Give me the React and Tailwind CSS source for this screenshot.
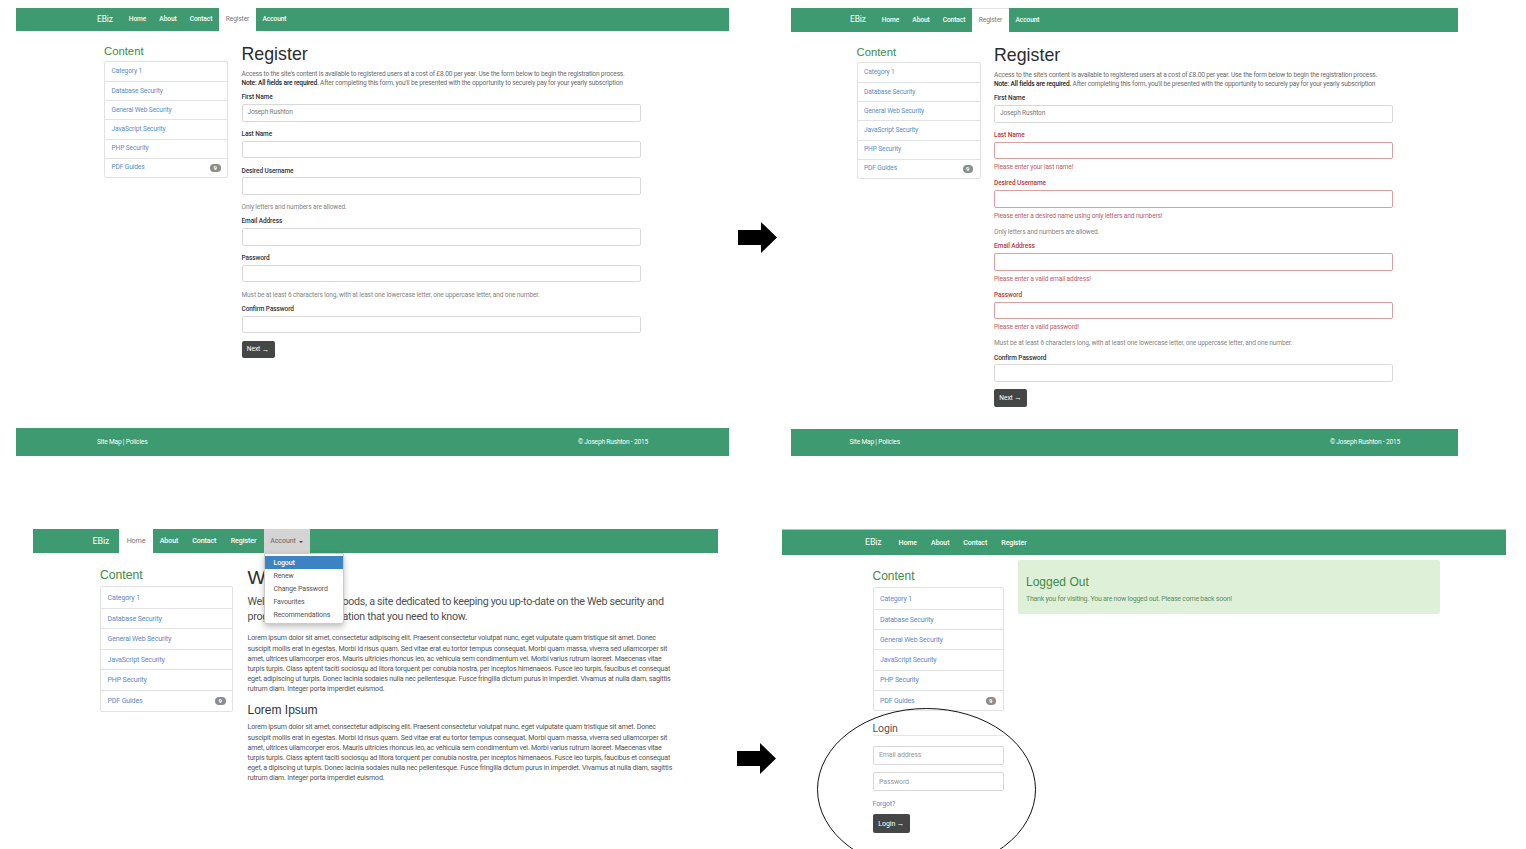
import React from "react";

const SANS = "font-['Roboto','Noto_Sans',sans-serif]";
const HEAD = "font-['Liberation_Sans',Arial,sans-serif]";

const LOREM = [
  "Lorem ipsum dolor sit amet, consectetur adipiscing elit. Praesent consectetur volutpat nunc, eget vulputate quam tristique sit amet. Donec",
  "suscipit mollis erat in egestas. Morbi id risus quam. Sed vitae erat eu tortor tempus consequat. Morbi quam massa, viverra sed ullamcorper sit",
  "amet, ultrices ullamcorper eros. Mauris ultricies rhoncus leo, ac vehicula sem condimentum vel. Morbi varius rutrum laoreet. Maecenas vitae",
  "turpis turpis. Class aptent taciti sociosqu ad litora torquent per conubia nostra, per inceptos himenaeos. Fusce leo turpis, faucibus et consequat",
  "eget, adipiscing ut turpis. Donec lacinia sodales nulla nec pellentesque. Fusce fringilla dictum purus in imperdiet. Vivamus at nulla diam, sagittis",
  "rutrum diam. Integer porta imperdiet euismod.",
];

const LOREM_SECOND = LOREM.map((line, i) =>
  i === 4 ? line.replace("eget, adipiscing", "eget, a dipiscing") : line
);

const CATEGORIES = [
  "Category 1",
  "Database Security",
  "General Web Security",
  "JavaScript Security",
  "PHP Security",
  "PDF Guides",
];

function Arrow({ className }) {
  return (
    <svg className={className} width="39" height="31" viewBox="0 0 39 31">
      <path d="M0 8h23V0l16 15.5L23 31v-8H0z" fill="#000" />
    </svg>
  );
}

function NavLink({ children, className = "" }) {
  return (
    <a className={`flex h-full items-center justify-center pt-[1.5px] whitespace-nowrap ${className}`}>
      {children}
    </a>
  );
}

function ArrowButton({ children, className }) {
  return (
    <button
      className={`flex items-center justify-center gap-[1.5px] rounded-[2px] bg-[#444746] tracking-[-0.05px] text-white ${className}`}
    >
      <span className="pt-[1px]">{children}</span>
      <span className={`${HEAD} text-[7.5px] leading-none`}>→</span>
    </button>
  );
}

function Sidebar({ headingClass, listClass, rowClass }) {
  return (
    <>
      <h3 className={`${HEAD} text-[#3f8a44] ${headingClass}`}>Content</h3>
      <ul className={`rounded-[2px] border border-[#e2e2e2] ${listClass}`}>
        {CATEGORIES.map((name, i) => (
          <li
            key={name}
            className={`flex items-center justify-between px-[6.5px] text-[#5a8cc6] ${rowClass} ${
              i > 0 ? "border-t border-[#e2e2e2]" : ""
            }`}
          >
            <span className="pt-[1px]">{name}</span>
            {name === "PDF Guides" && (
              <span className="flex h-[8px] w-[10.5px] items-center justify-center rounded-full bg-[#8c8c8c] text-[6px] leading-none font-bold text-white">
                9
              </span>
            )}
          </li>
        ))}
      </ul>
    </>
  );
}

function Field({ label, value, error, hint }) {
  return (
    <div>
      <div
        className={`h-[10px] text-[6.5px] leading-[10px] font-medium tracking-[-0.09px] ${
          error ? "text-[#b3383c]" : "text-[#333]"
        }`}
      >
        {label}
      </div>
      <div
        className={`mt-[1.8px] flex h-[17.5px] items-center rounded-[2px] border px-[5px] pt-[1px] text-[6.5px] tracking-[-0.12px] text-[#777] ${
          error ? "border-[#d9a09f]" : "border-[#d9d9d9]"
        }`}
      >
        {value}
      </div>
      {error && <div className="mt-[3px] h-[10px] leading-[10px] text-[#b9605f]">{error}</div>}
      <div className={error ? "h-[6.3px]" : "h-[7.4px]"} />
      {hint && <div className="mb-[4.2px] h-[10px] leading-[10px] text-[#858585]">{hint}</div>}
    </div>
  );
}

function RegisterForm({ errors = {} }) {
  return (
    <div className="w-[399px]">
      <h1 className={`${HEAD} h-[20px] text-[17.8px] leading-[20px] text-[#2c2c2c]`}>Register</h1>
      <p className="mt-[5.5px] text-[6.6px] leading-[9.9px] tracking-[-0.165px] whitespace-nowrap text-[#6a6a6a]">
        Access to the site's content is available to registered users at a cost of £8.00 per year. Use the form
        below to begin the registration process.
        <br />
        <b className="font-medium text-[#222]">Note: All fields are required.</b> After completing this form,
        you'll be presented with the opportunity to securely pay for your yearly subscription
      </p>
      <div className="mt-[2.9px] text-[6.6px] tracking-[-0.135px]">
        <Field label="First Name" value="Joseph Rushton" />
        <Field label="Last Name" error={errors.last} />
        <Field label="Desired Username" error={errors.username} hint="Only letters and numbers are allowed." />
        <Field label="Email Address" error={errors.email} />
        <Field
          label="Password"
          error={errors.password}
          hint="Must be at least 6 characters long, with at least one lowercase letter, one uppercase letter, and one number."
        />
        <Field label="Confirm Password" />
      </div>
      <ArrowButton className="h-[17.5px] w-[33px] text-[6.6px]">Next</ArrowButton>
    </div>
  );
}

function RegisterPage({ className, navClass, tabClass = "", footerClass, gutterClass, errors }) {
  return (
    <section className={`flex flex-col ${className}`}>
      <nav
        className={`flex items-center bg-[#3e9a70] text-[6.6px] font-medium tracking-[-0.08px] text-white ${navClass}`}
      >
        <span className="w-[25px] text-[8.4px] font-normal">EBiz</span>
        <NavLink className="w-[31px]">Home</NavLink>
        <NavLink className="w-[30px]">About</NavLink>
        <NavLink className="w-[36px]">Contact</NavLink>
        <NavLink className={`w-[37px] bg-white font-normal text-[#777] ${tabClass}`}>Register</NavLink>
        <NavLink className="w-[37px]">Account</NavLink>
      </nav>
      <div className={`flex flex-1 pt-[13.5px] ${gutterClass}`}>
        <aside className="w-[137.5px]">
          <Sidebar
            headingClass="text-[11.3px] leading-[14px]"
            listClass="mt-[2.9px] w-[124px] text-[6.6px] tracking-[-0.11px]"
            rowClass="h-[19.2px]"
          />
        </aside>
        <RegisterForm errors={errors} />
      </div>
      <footer
        className={`flex shrink-0 items-center justify-between bg-[#3e9a70] pt-[1.5px] text-[6.6px] tracking-[-0.18px] text-white ${footerClass}`}
      >
        <span>Site Map | Policies</span>
        <span>© Joseph Rushton - 2015</span>
      </footer>
    </section>
  );
}

function Paragraph({ lines }) {
  return (
    <p className="text-[7.1px] leading-[10.1px] tracking-[-0.192px] whitespace-nowrap text-[#555]">
      {lines.map((line) => (
        <span key={line} className="block">
          {line}
        </span>
      ))}
    </p>
  );
}

function MenuItem({ children, className = "text-[#555]" }) {
  return <div className={`flex h-[13.1px] items-center pt-[1.5px] pl-[9px] ${className}`}>{children}</div>;
}

function AccountMenu() {
  return (
    <div className="absolute top-full left-0 z-10 w-[80px] rounded-b-[2px] border border-[#ccc] bg-white pt-[2px] pb-[2px] text-[7px] font-normal tracking-[-0.14px] shadow-[0_3px_6px_rgba(0,0,0,0.25)]">
      <MenuItem className="bg-[#3b83c2] font-medium text-white">Logout</MenuItem>
      <MenuItem>Renew</MenuItem>
      <MenuItem>Change Password</MenuItem>
      <MenuItem>Favourites</MenuItem>
      <MenuItem>Recommendations</MenuItem>
    </div>
  );
}

function HomePage() {
  return (
    <section className="ml-[33px] w-[685px] shrink-0">
      <nav className="flex h-[24px] items-center bg-[#3e9a70] pl-[59.5px] text-[7.1px] font-medium tracking-[-0.1px] text-white">
        <span className="w-[26.5px] pt-[1px] text-[9px] font-normal">EBiz</span>
        <NavLink className="w-[34px] bg-white font-normal text-[#777]">Home</NavLink>
        <NavLink className="w-[32px]">About</NavLink>
        <NavLink className="w-[38.5px]">Contact</NavLink>
        <NavLink className="w-[40px]">Register</NavLink>
        <div className="relative h-full w-[46px] bg-[#d4d4d4]">
          <NavLink className="gap-[3px] font-normal text-[#666]">
            Account
            <svg width="4" height="2" viewBox="0 0 4 2">
              <path d="M0 0h4L2 2z" fill="#444" />
            </svg>
          </NavLink>
          <AccountMenu />
        </div>
      </nav>
      <div className="flex pl-[67px]">
        <aside className="w-[147.5px] shrink-0 pt-[14.6px]">
          <Sidebar
            headingClass="text-[12.2px] leading-[15px]"
            listClass="mt-[3.5px] w-[133px] text-[7.1px] tracking-[-0.17px]"
            rowClass="h-[20.6px]"
          />
        </aside>
        <article className="pt-[14px]">
          <h1 className={`${HEAD} h-[22px] text-[19.2px] leading-[22px] text-[#2c2c2c]`}>Welcome</h1>
          <p className="mt-[6px] text-[10.7px] leading-[14.6px] tracking-[-0.3px] whitespace-nowrap text-[#505050]">
            <span className="inline-block w-[95px]">Welcome to EBiz G</span>oods, a site dedicated to keeping you
            up-to-date on the Web security and
            <br />
            <span className="inline-block w-[95px]">programming inform</span>ation that you need to know.
          </p>
          <div className="mt-[9.3px]">
            <Paragraph lines={LOREM} />
          </div>
          <h3 className={`${HEAD} mt-[9px] h-[15px] text-[12px] leading-[15px] text-[#333]`}>Lorem Ipsum</h3>
          <div className="mt-[4.4px]">
            <Paragraph lines={LOREM_SECOND} />
          </div>
        </article>
      </div>
    </section>
  );
}

function LoggedOutPage() {
  return (
    <section className="relative ml-[6px] h-[320px] w-[724px] shrink-0">
      <nav className="flex h-[26px] items-center border-t border-[#a5cdb9] bg-[#3e9a70] pl-[83px] text-[7px] font-medium tracking-[-0.1px] text-white">
        <span className="w-[26.5px] pt-[1px] text-[8.8px] font-normal">EBiz</span>
        <NavLink className="w-[32.5px]">Home</NavLink>
        <NavLink className="w-[32.5px]">About</NavLink>
        <NavLink className="w-[37.5px]">Contact</NavLink>
        <NavLink className="w-[40px]">Register</NavLink>
      </nav>
      <div className="flex pl-[90.5px]">
        <aside className="w-[145.5px] shrink-0 pt-[14px]">
          <Sidebar
            headingClass="text-[12px] leading-[15px]"
            listClass="mt-[3.4px] w-[131px] text-[7px] tracking-[-0.17px]"
            rowClass="h-[20.3px]"
          />
          <div className="w-[131px] text-[7px] tracking-[-0.13px]">
            <h4 className="mt-[10px] h-[15px] border-b border-[#e5e5e5] text-[10.5px] leading-[15px] text-[#555]">
              Login
            </h4>
            <div className="mt-[10px] flex h-[19px] items-center rounded-[2px] border border-[#d9d9d9] px-[5.5px] text-[#999]">
              Email address
            </div>
            <div className="mt-[7.3px] flex h-[19px] items-center rounded-[2px] border border-[#d9d9d9] px-[5.5px] text-[#999]">
              Password
            </div>
            <a className="mt-[7.3px] block h-[11px] leading-[11px] text-[#5a8cc6]">Forgot?</a>
            <ArrowButton className="mt-[4.3px] h-[19px] w-[37.5px]">Login</ArrowButton>
          </div>
        </aside>
        <div className="mt-[5px] h-[53.5px] w-[422px] rounded-[2px] bg-[#dff0d8] px-[8px] pt-[14.6px]">
          <h3 className={`${HEAD} h-[15px] text-[12px] leading-[15px] text-[#3f8a44]`}>Logged Out</h3>
          <p className="mt-[4.4px] text-[7px] leading-[10px] tracking-[-0.24px] text-[#5d8f5f]">
            Thank you for visiting. You are now logged out. Please come back soon!
          </p>
        </div>
      </div>
      <svg
        className="absolute top-[179px] left-[35px]"
        width="220"
        height="141"
        viewBox="0 0 220 141"
        fill="none"
      >
        <ellipse cx="109.5" cy="81.5" rx="109" ry="81" stroke="#111" strokeWidth="1" />
      </svg>
    </section>
  );
}

export default function App() {
  return (
    <main className={`${SANS} h-[849px] w-[1526px] overflow-hidden bg-white`}>
      <div className="flex h-[529px] items-start pt-[8px]">
        <RegisterPage
          className="ml-[16px] h-[448px] w-[713px] shrink-0"
          navClass="h-[22.5px] pl-[81px]"
          gutterClass="pl-[88px]"
          footerClass="h-[28px] pl-[81px] pr-[81px]"
        />
        <Arrow className="mt-[214px] ml-[9px] shrink-0" />
        <RegisterPage
          className="ml-[14px] h-[448px] w-[667px] shrink-0"
          navClass="h-[23.5px] pl-[59px]"
          tabClass="border-t border-[#e2e2e2]"
          gutterClass="pl-[65.5px]"
          footerClass="h-[27px] pl-[58.5px] pr-[58px]"
          errors={{
            last: "Please enter your last name!",
            username: "Please enter a desired name using only letters and numbers!",
            email: "Please enter a valid email address!",
            password: "Please enter a valid password!",
          }}
        />
      </div>
      <div className="flex h-[320px] items-start">
        <HomePage />
        <Arrow className="mt-[213.5px] ml-[19px] shrink-0" />
        <LoggedOutPage />
      </div>
    </main>
  );
}
